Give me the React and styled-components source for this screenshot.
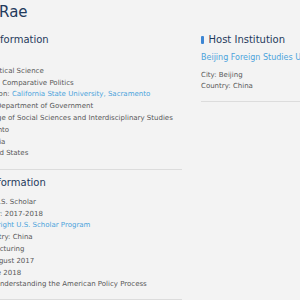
import React from "react";
import styled, { createGlobalStyle } from "styled-components";

const Global = createGlobalStyle`
  html, body { margin: 0; padding: 0; background: #f3f3f3; overflow: hidden; }
  body { font-family: "DejaVu Sans", "Liberation Sans", sans-serif; }
`;

const Page = styled.div`
  width: 420px;
  margin-left: -51px;
  padding-top: 3px;
`;

const Title = styled.h1`
  margin: 0;
  font-size: 15px;
  line-height: 18px;
  font-weight: 500;
  color: #1f3a5c;
`;

const Columns = styled.div`
  display: grid;
  grid-template-columns: 233px 1fr;
  column-gap: 19px;
  margin-top: 13px;
  align-items: start;
`;

const Column = styled.div`
  display: flex;
  flex-direction: column;
`;

const Section = styled.section`
  border-bottom: 1px solid #dcdcdc;
  padding-bottom: ${(p) => p.$pb || 8}px;
  margin-bottom: 7px;
`;

const Heading = styled.h2`
  display: flex;
  align-items: center;
  gap: 5px;
  margin: 0 0 ${(p) => p.$mb || 8}px 0;
  font-size: 10px;
  line-height: 12px;
  font-weight: 500;
  color: #1f3a5c;
  &::before {
    content: "";
    width: 2.5px;
    height: 8px;
    background: #3d86d4;
    border-radius: 1px;
  }
`;

const Lines = styled.ul`
  list-style: none;
  margin: 0;
  padding: 0;
`;

const Line = styled.li`
  font-size: 7px;
  line-height: 11.8px;
  color: #585858;
  white-space: nowrap;
`;

const Link = styled.a`
  color: #4ba3dc;
  text-decoration: none;
`;

const InstLink = styled.a`
  display: block;
  font-size: 8px;
  line-height: 10px;
  color: #4ba3dc;
  text-decoration: none;
  white-space: nowrap;
  margin-bottom: 6.5px;
`;

const profile = [
  ["Role", "Faculty"],
  ["Discipline", "Political Science"],
  ["Specialization", "Comparative Politics"],
  ["Home Institution", "California State University, Sacramento", true],
  ["Department", "Department of Government"],
  ["College", "College of Social Sciences and Interdisciplinary Studies"],
  ["City", "Sacramento"],
  ["State", "California"],
  ["Country", "United States"],
];

const award = [
  ["Award Type", "U.S. Scholar"],
  ["Academic Year", "2017-2018"],
  ["Program", "Fulbright U.S. Scholar Program", true],
  ["Program Country", "China"],
  ["Grant Type", "Lecturing"],
  ["Start Date", "August 2017"],
  ["End Date", "June 2018"],
  ["Project Title", "Understanding the American Policy Process"],
];

function Rows({ items }) {
  return (
    <Lines>
      {items.map(([k, v, link]) => (
        <Line key={k}>
          {k}: {link ? <Link href="#">{v}</Link> : v}
        </Line>
      ))}
    </Lines>
  );
}

export default function App() {
  return (
    <>
      <Global />
      <Page>
        <Title>James Rae</Title>
        <Columns>
          <Column>
            <Section $pb={8.7}>
              <Heading>Profile Information</Heading>
              <Rows items={profile} />
            </Section>
            <Section>
              <Heading>Grant Information</Heading>
              <Rows items={award} />
            </Section>
          </Column>
          <Column>
            <Section>
              <Heading $mb={7}>Host Institution</Heading>
              <InstLink href="#">Beijing Foreign Studies University</InstLink>
              <Lines>
                <Line>City: Beijing</Line>
                <Line>Country: China</Line>
              </Lines>
            </Section>
          </Column>
        </Columns>
      </Page>
    </>
  );
}
